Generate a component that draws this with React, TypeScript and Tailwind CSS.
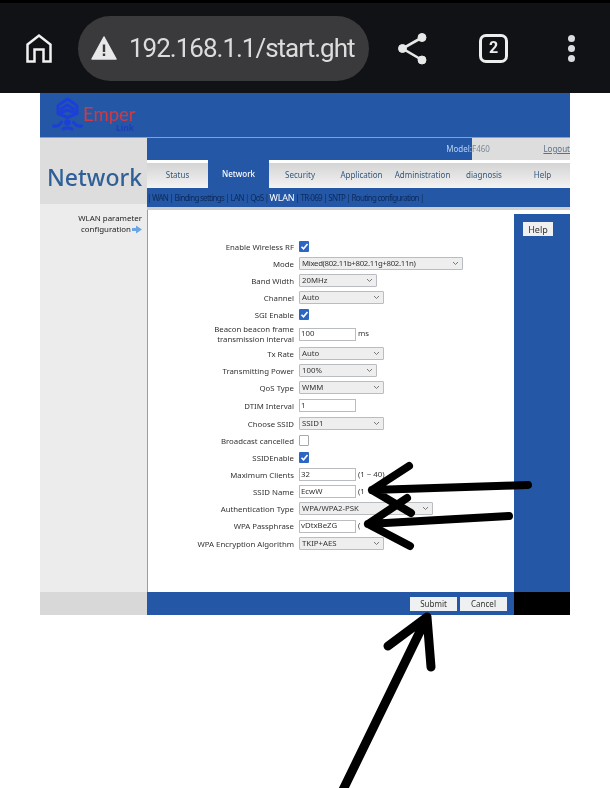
import React from "react";

const F = "[font-family:'Noto_Sans','Open_Sans',sans-serif]";

function Label({ children }: { children: React.ReactNode }) {
  return <div className="w-[151px] shrink-0 pr-[5px] text-right leading-[10px]">{children}</div>;
}

function Select({ value, w, tight }: { value: string; w: string; tight?: boolean }) {
  return (
    <div className={`${w} h-[13px] bg-[#eeeeee] border border-[#b9bcc0] flex items-center justify-between pl-[2px] pr-[3px] rounded-[1px]`}>
      <span className={tight ? "leading-none tracking-[-0.33px]" : "leading-none"}>{value}</span>
      <svg width="7" height="5" viewBox="0 0 7 5" fill="none" stroke="#777" strokeWidth="1">
        <path d="M1 1l2.500 2.500L6 1" />
      </svg>
    </div>
  );
}

function Input({ value, extra }: { value: string; extra?: string }) {
  return (
    <div className="flex items-center">
      <div className="w-[57px] h-[13px] bg-white border border-[#b9bcc0] flex items-center pl-[1px] leading-none">{value}</div>
      {extra ? <span className="ml-[2px]">{extra}</span> : null}
    </div>
  );
}

function Check({ on }: { on?: boolean }) {
  return on ? (
    <div className="w-[10px] h-[11px] rounded-[1px] bg-[#2c66c4] flex items-center justify-center">
      <svg width="9" height="9" viewBox="0 0 9 9" fill="none" stroke="#fff" strokeWidth="1.600">
        <path d="M1.500 4.800l2 2L7.500 2" />
      </svg>
    </div>
  ) : (
    <div className="w-[10px] h-[11px] rounded-[1px] bg-white border border-[#a9a9a9]" />
  );
}

function Row({ label, h = "h-[17px]", children }: { label: React.ReactNode; h?: string; children: React.ReactNode }) {
  return (
    <div className={`${h} flex items-center`}>
      <Label>{label}</Label>
      <div className="flex items-center">{children}</div>
    </div>
  );
}

const tabs = [
  ["Status", "w-[61px]"],
  ["Network", "w-[61px]"],
  ["Security", "w-[62px]"],
  ["Application", "w-[61px]"],
  ["Administration", "w-[61px]"],
  ["diagnosis", "w-[62px]"],
  ["Help", "w-[55px]"],
];

export default function App() {
  return (
    <div className={`relative w-[610px] h-[788px] bg-white overflow-hidden blur-[0.4px] ${F}`}>
      {/* Browser toolbar */}
      <div className="h-[93px] bg-[#101216] border-t-[3px] border-black flex items-center font-['Roboto',sans-serif]">
        <svg className="ml-[25px] w-[28px] h-[30px] shrink-0" viewBox="0 0 28 30" fill="none" stroke="#f1f1f1" strokeWidth="2.500" strokeLinejoin="miter">
          <path d="M2.500 11.500L14 2.500l11.500 9V28.500H18.500V16.500h-9V28.500H2.500z" />
        </svg>
        <div className="ml-[25px] w-[291px] h-[65px] rounded-full bg-[#3a3a3c] flex items-center">
          <svg className="ml-[13px] w-[26px] h-[24px] shrink-0" viewBox="0 0 26 24">
            <path d="M13 1L25 23H1z" fill="#e8e8e8" stroke="#e8e8e8" strokeWidth="1.500" strokeLinejoin="round" />
            <rect x="11.800" y="8.500" width="2.400" height="7.500" fill="#3a3a3c" />
            <rect x="11.800" y="17.500" width="2.400" height="2.500" fill="#3a3a3c" />
          </svg>
          <span className="ml-[12px] text-[26px] tracking-[-1px] leading-none text-[#dcdcdc] whitespace-nowrap">192.168.1.1/start.ght</span>
        </div>
        <svg className="ml-[28px] w-[32px] h-[34px] shrink-0" viewBox="0 0 32 34" fill="#e8e8e8" stroke="#e8e8e8">
          <path d="M25 6.500L5.500 17.500 25 29" fill="none" strokeWidth="2.600" />
          <circle cx="25" cy="6.500" r="4" />
          <circle cx="5.500" cy="17.500" r="4" />
          <circle cx="25" cy="29" r="4" />
        </svg>
        <div className="ml-[50px] w-[29px] h-[29px] rounded-[7px] border-[3px] border-[#eeeeee] flex items-center justify-center text-[16px] font-bold text-[#eeeeee] leading-none">2</div>
        <div className="ml-[60px] flex flex-col gap-[3px]">
          <div className="w-[7px] h-[7px] rounded-full bg-[#dcdce0]" />
          <div className="w-[7px] h-[7px] rounded-full bg-[#dcdce0]" />
          <div className="w-[7px] h-[7px] rounded-full bg-[#dcdce0]" />
        </div>
      </div>

      {/* Router page */}
      <div className="ml-[40px] w-[530px]">
        <div className="h-[45px] bg-[#2458a6] border-b border-[#7fa3d6] flex items-start">
          <svg className="ml-[12px] mt-[4px] w-[31px] h-[36px] shrink-0" viewBox="0 0 31 36" fill="none" stroke="#1c3fd8" strokeWidth="3" strokeLinejoin="round" strokeLinecap="round">
            <path d="M15.500 2L6 8.500v8l9.500 4 9.500-4v-8z" />
            <path d="M9 12l6.500-4 6.500 4" />
            <path d="M7 16l8.500-3 8.500 3" />
            <path d="M1.500 29c3 .5 6-.5 8-4" />
            <path d="M29.500 29c-3 .5-6-.5-8-4" />
            <path d="M11 32c2-1.500 7-1.500 9 0" />
            <circle cx="15.500" cy="25.500" r="1.800" fill="#1c3fd8" />
          </svg>
          <div className="w-[60px] pt-[13px] flex flex-col">
            <span className="h-[16px] text-[18.500px] leading-[16px] text-[#cf3a42] font-['Lato',sans-serif]">Emper</span>
            <span className="ml-[33px] mt-[1px] text-[8.500px] leading-[9px] font-bold text-[#1c3fb8]">Link</span>
          </div>
        </div>

        <div className="flex">
          {/* left column */}
          <div className="w-[107px] shrink-0 flex flex-col">
            <div className="h-[66px] bg-[#dddddd] flex items-center justify-center pt-[12px] pl-[2px]">
              <span className="text-[23px] leading-none font-medium text-[#2e5f97]">Network</span>
            </div>
            <div className="flex-1 bg-[#ececec] pt-[9px] pr-[5px] text-right text-[7.900px] leading-[11px] text-[#222]">
              <div>WLAN parameter</div>
              <div className="flex justify-end items-center gap-[1px]">
                configuration
                <svg width="10" height="9" viewBox="0 0 10 9"><path d="M0 3h4V.5l6 4-6 4V6H0z" fill="#6aa5e4" /></svg>
              </div>
            </div>
            <div className="h-[23px] bg-[#d8d8d8]" />
          </div>

          {/* right column */}
          <div className="flex-1 min-w-0 flex flex-col">
            <div className="h-[22px] flex text-[8px]">
              <div className="w-[325px] bg-[#2458a6] flex items-center justify-end text-[#b8d2f0]">Model:</div>
              <div className="flex-1 bg-[#dddddd] flex items-center justify-between text-[#7d8894]">
                <span>F460</span>
                <span className="underline text-[#5b7088]">Logout</span>
              </div>
            </div>
            <div className="h-[28px] flex text-[8px]">
              {tabs.map(([t, w]) =>
                t === "Network" ? (
                  <div key={t} className={`${w} bg-[#2458a6] flex items-center justify-center text-white font-medium`}>{t}</div>
                ) : (
                  <div key={t} className={`${w} border-t-[3px] border-white border-b border-b-[#f4f4f4] bg-gradient-to-b from-[#d4d4d4] to-[#f2f2f2] flex items-center justify-center text-[#33577f]`}>{t}</div>
                )
              )}
            </div>
            <div className="h-[19px] bg-[#2458a6] flex items-center text-[8px] tracking-[-0.72px] text-[#0c2a5c] whitespace-nowrap">
              | WAN | Binding settings | LAN | QoS | <span className="text-white text-[9px] tracking-[-0.2px] mx-[1px]">WLAN</span> | TR-069 | SNTP | Routing configuration |
            </div>
            <div className="h-[3px] bg-[#cfcfcf]" />

            <div className="flex flex-1 bg-white border-l border-l-[#9c9c9c]">
              {/* form */}
              <div className="flex-1 min-w-0 h-[382px] pt-[28px] text-[7.800px] text-[#333] whitespace-nowrap">
                <Row label="Enable Wireless RF"><Check on /></Row>
                <Row label="Mode"><Select tight value="Mixed(802.11b+802.11g+802.11n)" w="w-[164px]" /></Row>
                <Row label="Band Width"><Select value="20MHz" w="w-[78px]" /></Row>
                <Row label="Channel"><Select value="Auto" w="w-[85px]" /></Row>
                <Row label="SGI Enable"><Check on /></Row>
                <Row h="h-[22px]" label={<><div>Beacon beacon frame</div><div>transmission interval</div></>}><Input value="100" extra="ms" /></Row>
                <Row label="Tx Rate"><Select value="Auto" w="w-[85px]" /></Row>
                <Row label="Transmitting Power"><Select value="100%" w="w-[78px]" /></Row>
                <Row label="QoS Type"><Select value="WMM" w="w-[85px]" /></Row>
                <Row h="h-[19px]" label="DTIM Interval"><Input value="1" /></Row>
                <Row label="Choose SSID"><Select value="SSID1" w="w-[85px]" /></Row>
                <Row label="Broadcast cancelled"><Check /></Row>
                <Row label="SSIDEnable"><Check on /></Row>
                <Row label="Maximum Clients"><Input value="32" extra="(1 ~ 40)" /></Row>
                <Row label="SSID Name"><Input value="EcwW" extra="(1" /></Row>
                <Row label="Authentication Type"><Select value="WPA/WPA2-PSK" w="w-[134px]" /></Row>
                <Row h="h-[18px]" label="WPA Passphrase"><Input value="vDtxBeZG" extra="(" /></Row>
                <Row label="WPA Encryption Algorithm"><Select value="TKIP+AES" w="w-[85px]" /></Row>
              </div>
              {/* help column */}
              <div className="w-[56px] shrink-0 mt-[4px] bg-[#2458a6] pt-[8px] pl-[9px] flex items-start">
                <div className="w-[30px] h-[14px] bg-[#f0f0f0] flex items-center justify-center text-[9px] text-[#333] leading-none">Help</div>
              </div>
            </div>

            {/* footer */}
            <div className="h-[23px] flex">
              <div className="flex-1 bg-[#2458a6] flex items-center justify-end pr-[7px] gap-[3px] text-[8px] text-[#333]">
                <div className="w-[47px] h-[14px] bg-[#eef0f2] flex items-center justify-center">Submit</div>
                <div className="w-[47px] h-[14px] bg-[#eef0f2] flex items-center justify-center">Cancel</div>
              </div>
              <div className="w-[56px] bg-black" />
            </div>
          </div>
        </div>
      </div>

      {/* Hand-drawn arrows over the screenshot */}
      <svg className="absolute left-0 top-0 pointer-events-none" width="610" height="788" viewBox="0 0 610 788" fill="none" stroke="#000" strokeWidth="8" strokeLinecap="round" strokeLinejoin="round">
        <path d="M528 485L372 490M409 466L372 490L411 513" />
        <path d="M509 516L368 524M407 498L368 524L410 546" />
        <path d="M340 796L427 617M388 646L427 617L431 667" strokeWidth="9" />
      </svg>
    </div>
  );
}
